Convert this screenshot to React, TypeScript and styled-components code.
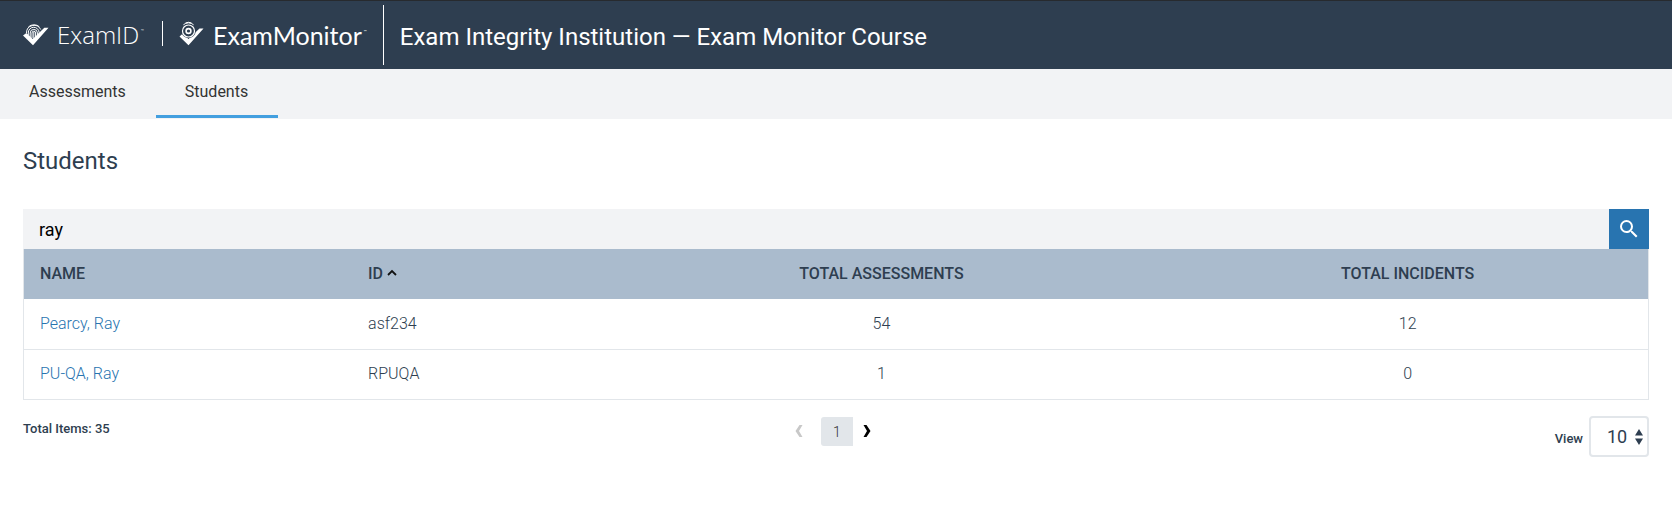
import React, { useState } from "react";
import styled, { createGlobalStyle } from "styled-components";

const colors = {
  navy: "#2e3e50",
  panel: "#f2f3f5",
  head: "#aabbcd",
  border: "#e2e6ea",
  blue: "#2874b0",
  accent: "#439fdf",
};

const GlobalStyle = createGlobalStyle`
  *, *::before, *::after { box-sizing: border-box; }
  body {
    margin: 0;
    background: #fff;
    color: ${colors.navy};
    font: 16px/24px Roboto, "Liberation Sans", sans-serif;
  }
  button, input, select { font: inherit; margin: 0; }
`;

const Header = styled.header`
  display: flex;
  align-items: flex-start;
  min-height: 69px;
  padding: 4px 24px 0 23px;
  border-top: 1px solid #272a2e;
  background: ${colors.navy};
  color: #fff;
`;

const Brand = styled.a`
  display: flex;
  align-items: flex-start;
  padding-top: 14px;
  color: #fff;
  text-decoration: none;
`;

const Wordmark = styled.span<{ $family: string; $size: number; $weight: number }>`
  font-family: ${(p) => p.$family}, sans-serif;
  font-weight: ${(p) => p.$weight};
  font-size: ${(p) => p.$size}px;
  line-height: 32px;
  margin-left: 8px;
`;

const Mark = styled.sup`
  margin-left: 2px;
  font-size: 4px;
  line-height: 4px;
  vertical-align: 12px;
`;

const BrandDivider = styled.span`
  width: 1px;
  height: 25px;
  margin: 16px 16px 0 18px;
  background: #fff;
`;

const TitleDivider = styled(BrandDivider)`
  height: 60px;
  margin: 0 16px;
`;

const CourseTitle = styled.p`
  margin: 0;
  padding-top: 16px;
  font-size: 24px;
  line-height: 32px;
`;

const Nav = styled.nav`
  display: flex;
  height: 50px;
  background: ${colors.panel};
`;

const Tab = styled.a<{ $active?: boolean }>`
  height: 49px;
  padding: 11px 30px 0 29px;
  border-bottom: 3px solid ${(p) => (p.$active ? colors.accent : "transparent")};
  color: #333;
  text-decoration: none;
`;

const Main = styled.main`
  padding: 26px 23px;
`;

const Heading = styled.h1`
  margin: 0 0 32px;
  font-size: 24px;
  line-height: 32px;
  font-weight: 400;
`;

const SearchBar = styled.form`
  display: flex;
  height: 40px;
`;

const SearchInput = styled.input`
  flex: 1;
  min-width: 0;
  padding: 2px 16px 0;
  border: 0;
  outline: 0;
  background: ${colors.panel};
  color: #000;
  font-size: 18px;
`;

const SearchButton = styled.button`
  display: grid;
  place-items: center;
  width: 40px;
  padding: 0;
  border: 0;
  background: ${colors.blue};
  color: #fff;
`;

const Table = styled.table`
  width: 100%;
  table-layout: fixed;
  border-spacing: 0;
  border: 1px solid ${colors.border};
  border-top: 0;
`;

const Col = styled.col<{ $share: number }>`
  width: ${(p) => p.$share}%;
`;

const HeadCell = styled.th<{ $center?: boolean }>`
  height: 50px;
  padding: 0 16px;
  background: ${colors.head};
  font-weight: 500;
  text-align: ${(p) => (p.$center ? "center" : "left")};
`;

const SortButton = styled.button`
  display: flex;
  align-items: center;
  gap: 4px;
  padding: 0;
  border: 0;
  background: none;
  color: inherit;
  font-weight: 500;
`;

const Cell = styled.td<{ $center?: boolean }>`
  height: 50px;
  padding: 0 16px;
  font-weight: 300;
  text-align: ${(p) => (p.$center ? "center" : "left")};

  tr + tr > & {
    padding-bottom: 2px;
    border-top: 1px solid ${colors.border};
  }
`;

const StudentLink = styled.a`
  color: ${colors.blue};
  text-decoration: none;
`;

const Footer = styled.footer`
  display: grid;
  grid-template-columns: 1fr auto 1fr;
  align-items: start;
  padding-top: 16px;
`;

const SmallText = styled.span`
  padding-top: 1px;
  font-size: 13px;
  line-height: 24px;
  font-weight: 500;
`;

const ViewText = styled(SmallText)`
  padding-top: 4px;
`;

const Pager = styled.div`
  display: flex;
  align-items: center;
  height: 29px;
  margin-top: 1px;
  padding-right: 6px;
`;

const Arrow = styled.button`
  display: grid;
  place-items: center;
  width: 28px;
  height: 29px;
  padding: 0 0 2px;
  border: 0;
  background: none;
  color: #000;
  &:disabled { color: #c8c8c8; }
`;

const Page = styled.button`
  width: 32px;
  height: 29px;
  margin-left: 8px;
  padding: 0;
  border: 0;
  border-radius: 3px 0 0 3px;
  background: ${colors.border};
  color: #333;
  font-size: 14px;
  font-weight: 300;
`;

const ViewSize = styled.label`
  display: flex;
  align-items: center;
  justify-content: flex-end;
  gap: 6px;
`;

const SelectFrame = styled.span`
  display: grid;
  grid-template-columns: 1fr;
  align-items: center;
`;

const Select = styled.select`
  grid-area: 1 / 1;
  width: 60px;
  height: 41px;
  padding: 0 20px 0 16px;
  appearance: none;
  border: 2px solid ${colors.border};
  border-radius: 4px;
  background: #fff;
  color: ${colors.navy};
  font-size: 18px;
`;

const SelectArrows = styled.svg`
  grid-area: 1 / 1;
  justify-self: end;
  margin-right: 6px;
  pointer-events: none;
`;

const FingerprintLogo = () => (
  <svg width="26" height="28" viewBox="0 0 26 28" aria-hidden="true">
    <g fill="none" stroke="#fff" strokeWidth="1">
      <path d="M3.5 14a7.5 7.5 0 0 1 14.2-3.5" />
      <path d="M5.3 16v-2a5.4 5.4 0 0 1 10.8-.6V17" />
      <path d="M7.2 18v-4a3.6 3.6 0 0 1 7.2 0v4" />
      <path d="M9 19v-5a1.8 1.8 0 0 1 3.6 0v5M10.8 13v7" />
      <path d="M5.5 7.8a8.5 8.5 0 0 1 10.8-.1" />
    </g>
    <path d="M0 16.6 3.4 14 9.8 20 21.3 8.8H25.5L10 26.3Z" fill="#fff" />
  </svg>
);

const MonitorLogo = () => (
  <svg width="26" height="28" viewBox="0 0 26 28" aria-hidden="true">
    <path d="M0.5 17.5 3.5 14.8 9.5 20 20.5 9.5H24.5L9.5 26.3Z" fill="#fff" />
    <circle cx="9.5" cy="12" r="7.2" fill={colors.navy} />
    <g fill="none" stroke="#fff">
      <circle cx="9.5" cy="12" r="6" strokeWidth="1.2" />
      <circle cx="9.5" cy="12" r="2.4" strokeWidth="1.6" />
      <path d="M4.4 5.8a7.6 7.6 0 0 1 10.2 0" strokeWidth="1" />
      <path d="M6.5 4a7 7 0 0 1 6 0" strokeWidth="1" />
    </g>
  </svg>
);

const students = [
  { name: "Pearcy, Ray", id: "asf234", assessments: 54, incidents: 12 },
  { name: "PU-QA, Ray", id: "RPUQA", assessments: 1, incidents: 0 },
];

export default function App() {
  const [query, setQuery] = useState("ray");
  return (
    <>
      <GlobalStyle />
      <Header>
        <Brand href="#examid">
          <FingerprintLogo />
          <Wordmark $family='"Open Sans"' $size={24} $weight={300}>ExamID<Mark>™</Mark></Wordmark>
        </Brand>
        <BrandDivider />
        <Brand href="#exammonitor">
          <MonitorLogo />
          <Wordmark $family="Lato" $size={25} $weight={400}>ExamMonitor<Mark>™</Mark></Wordmark>
        </Brand>
        <TitleDivider />
        <CourseTitle>Exam Integrity Institution — Exam Monitor Course</CourseTitle>
      </Header>
      <Nav>
        <Tab href="#assessments">Assessments</Tab>
        <Tab href="#students" $active aria-current="page">Students</Tab>
      </Nav>
      <Main>
        <Heading>Students</Heading>
        <SearchBar role="search" onSubmit={(e) => e.preventDefault()}>
          <SearchInput
            aria-label="Search students"
            value={query}
            onChange={(e) => setQuery(e.target.value)}
          />
          <SearchButton type="submit" aria-label="Search">
            <svg width="24" height="24" viewBox="0 0 24 24" fill="currentColor" aria-hidden="true">
              <path d="M15.5 14h-.79l-.28-.27A6.47 6.47 0 0 0 16 9.5 6.5 6.5 0 1 0 9.5 16c1.61 0 3.09-.59 4.23-1.57l.27.28v.79l5 4.99L20.49 19l-4.99-5zm-6 0C7.01 14 5 11.99 5 9.5S7.01 5 9.5 5 14 7.01 14 9.5 11.99 14 9.5 14z" />
            </svg>
          </SearchButton>
        </SearchBar>
        <Table>
          <colgroup>
            <Col $share={20.2} />
            <Col $share={15} />
            <Col $share={35.2} />
            <Col $share={29.6} />
          </colgroup>
          <thead>
            <tr>
              <HeadCell scope="col">NAME</HeadCell>
              <HeadCell scope="col" aria-sort="ascending">
                <SortButton type="button">
                  ID
                  <svg width="10" height="12" viewBox="0 0 10 12" aria-hidden="true">
                    <path d="M1 7 5 3 9 7" fill="none" stroke="#111" strokeWidth="1.8" />
                  </svg>
                </SortButton>
              </HeadCell>
              <HeadCell scope="col" $center>TOTAL ASSESSMENTS</HeadCell>
              <HeadCell scope="col" $center>TOTAL INCIDENTS</HeadCell>
            </tr>
          </thead>
          <tbody>
            {students.map((s) => (
              <tr key={s.id}>
                <Cell><StudentLink href={`#${s.id}`}>{s.name}</StudentLink></Cell>
                <Cell>{s.id}</Cell>
                <Cell $center>{s.assessments}</Cell>
                <Cell $center>{s.incidents}</Cell>
              </tr>
            ))}
          </tbody>
        </Table>
        <Footer>
          <SmallText>Total Items: 35</SmallText>
          <Pager>
            <Arrow type="button" disabled aria-label="Previous page">
              <svg width="8" height="12" viewBox="0 0 8 12" fill="currentColor" aria-hidden="true">
                <path d="M4.5 0H7.5L4 6 7.5 12H4.5L.5 6Z" />
              </svg>
            </Arrow>
            <Page type="button" aria-current="page">1</Page>
            <Arrow type="button" aria-label="Next page">
              <svg width="8" height="12" viewBox="0 0 8 12" fill="currentColor" aria-hidden="true">
                <path d="M3.5 0H.5L4 6 .5 12H3.5L7.5 6Z" />
              </svg>
            </Arrow>
          </Pager>
          <ViewSize>
            <ViewText>View</ViewText>
            <SelectFrame>
              <Select defaultValue="10">
                <option>10</option>
                <option>25</option>
                <option>50</option>
              </Select>
              <SelectArrows width="8" height="16" viewBox="0 0 8 16" fill={colors.navy} aria-hidden="true">
                <path d="M4 0 8 6.5H0ZM4 16 0 9.5H8Z" />
              </SelectArrows>
            </SelectFrame>
          </ViewSize>
        </Footer>
      </Main>
    </>
  );
}
